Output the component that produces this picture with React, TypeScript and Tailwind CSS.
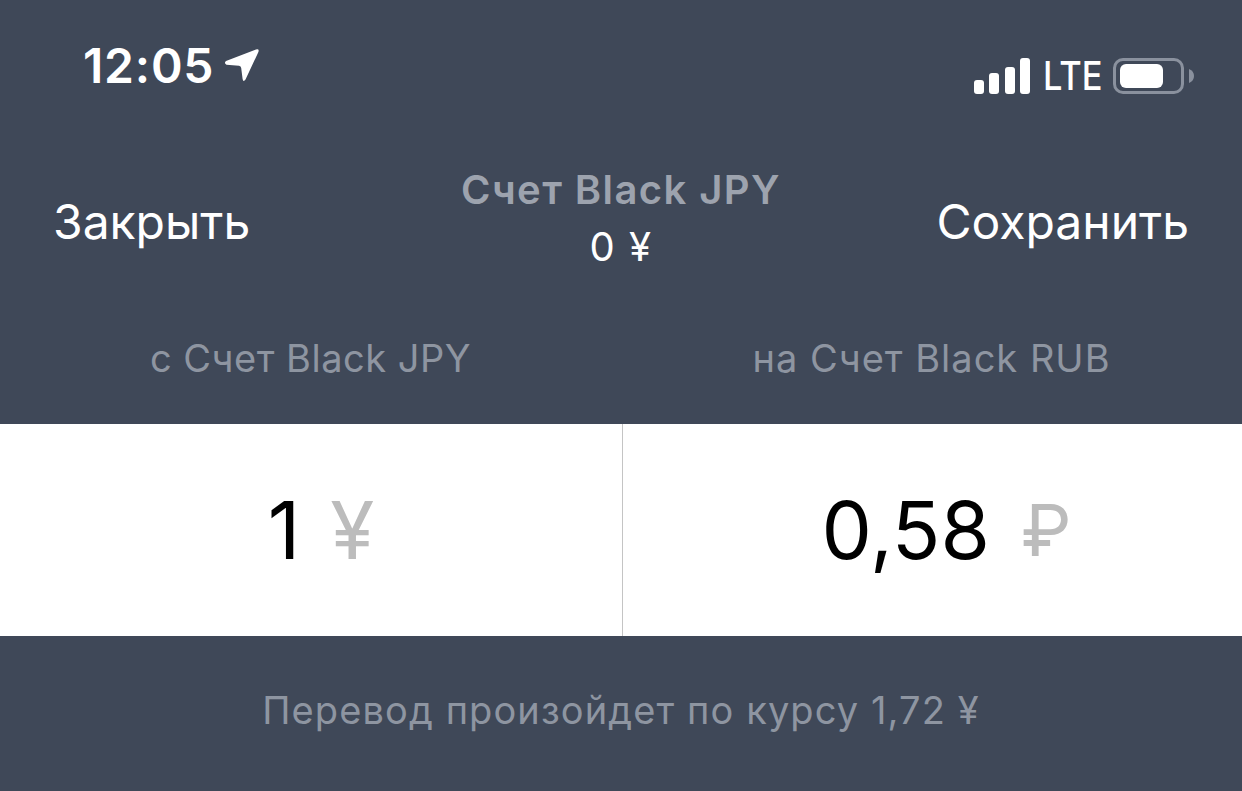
const font = "font-['Inter','Liberation_Sans',sans-serif]";

function LocationArrow() {
  return (
    <svg width="36" height="36" viewBox="0 0 36 36" className="ml-[10px] mt-[11px]">
      <path d="M2 13 L32 1.5 Q35.5 0.6 34.4 4 L21.5 31.5 Q19.3 34.5 18.6 31 L17.2 20 Q17 18 15 17.8 L2.5 16.8 Q-0.4 15 2 13 Z" fill="#fff" />
    </svg>
  );
}

function StatusIcons() {
  return (
    <div className="flex items-center">
      <div className="flex items-end gap-[5.4px]">
        <span className="w-[10px] h-[14px] rounded-[3px] bg-white" />
        <span className="w-[10px] h-[21px] rounded-[3px] bg-white" />
        <span className="w-[10px] h-[27px] rounded-[3px] bg-white" />
        <span className="w-[10px] h-[36px] rounded-[3px] bg-white" />
      </div>
      <span className="ml-[13px] w-[57px] text-[40px] leading-[36px] font-medium text-white scale-x-[0.86] origin-left">LTE</span>
      <div className="ml-[13px] flex items-center">
        <div className="w-[71px] h-[36px] rounded-[10px] border-[3px] border-[#8a919e] py-[3px] px-[4px]">
          <div className="w-[43px] h-full rounded-[6px] bg-white" />
        </div>
        <svg width="5" height="14" viewBox="0 0 5 14" className="ml-[5px]">
          <path d="M0 0 Q5 2 5 7 Q5 12 0 14 Z" fill="#8a919e" />
        </svg>
      </div>
    </div>
  );
}

export default function App() {
  return (
    <div className={`${font} w-[1242px] h-[791px] overflow-hidden bg-[#3f4858] flex flex-col`}>
      <div className="h-[134px] flex justify-between">
        <div className="flex items-start pl-[83px] pt-[37px]">
          <span className="text-[48px] leading-[58px] font-semibold text-white tracking-[0.8px]">12:05</span>
          <LocationArrow />
        </div>
        <div className="pr-[48px] pt-[58px]">
          <StatusIcons />
        </div>
      </div>

      <div className="h-[166px] grid grid-cols-[1fr_auto_1fr] px-[53px]">
        <span className="text-[48px] leading-[56px] mt-[60px] text-white">Закрыть</span>
        <div className="flex flex-col items-center mt-[31px]">
          <span className="text-[40px] leading-[50px] font-semibold tracking-[1.4px] text-[#9da3ae]">Счет Black JPY</span>
          <span className="text-[40px] leading-[46px] tracking-[1.5px] text-white mt-[9px]">0 ¥</span>
        </div>
        <span className="text-[48px] leading-[56px] mt-[60px] text-white text-right">Сохранить</span>
      </div>

      <div className="h-[124px] flex">
        <div className="flex-1 text-center pt-[34px] text-[38px] leading-[48px] tracking-[0.5px] text-[#8e95a1]">с Счет Black JPY</div>
        <div className="flex-1 text-center pt-[34px] text-[38px] leading-[48px] tracking-[1px] text-[#8e95a1]">на Счет Black RUB</div>
      </div>

      <div className="h-[212px] bg-white flex">
        <div className="w-[623px] flex items-center justify-center border-r border-[#c4c4c4] gap-[30px] pl-[20px]">
          <span className="text-[80px] leading-none text-black">1</span>
          <span className="text-[80px] leading-none text-[#bcbcbc]">¥</span>
        </div>
        <div className="flex-1 flex items-center justify-center gap-[31px] pl-[28px]">
          <span className="text-[80px] leading-none text-black">0,58</span>
          <span className="text-[72px] leading-none text-[#bcbcbc]">₽</span>
        </div>
      </div>

      <div className="flex-1 text-center pt-[50px] text-[38px] leading-[48px] tracking-[1.1px] text-[#8e95a1]">Перевод произойдет по курсу 1,72 ¥</div>
    </div>
  );
}
